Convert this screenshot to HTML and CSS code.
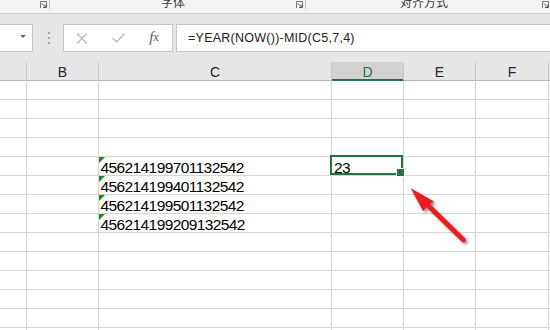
FILE: index.html
```html
<!DOCTYPE html>
<html lang="zh">
<head>
<meta charset="utf-8">
<link rel="stylesheet" href="styles.css">
</head>
<body>
<div class="app">
  <div class="ribbon">
    <div class="group g1">
      <svg class="launcher" width="7" height="8" viewBox="0 0 7 8"><path d="M0.5 7V0.5H6.5V7" fill="none" stroke="#777" stroke-width="1"/><path d="M2 2.5L5.5 6M3 6.5H6V3.5" fill="none" stroke="#555" stroke-width="1"/></svg>
    </div>
    <span class="sep"></span>
    <div class="group g2">
      <span class="glabel">字体</span>
      <svg class="launcher" width="7" height="8" viewBox="0 0 7 8"><path d="M0.5 7V0.5H6.5V7" fill="none" stroke="#777" stroke-width="1"/><path d="M2 2.5L5.5 6M3 6.5H6V3.5" fill="none" stroke="#555" stroke-width="1"/></svg>
    </div>
    <span class="sep"></span>
    <div class="group g3">
      <span class="glabel">对齐方式</span>
      <svg class="launcher" width="7" height="8" viewBox="0 0 7 8"><path d="M0.5 7V0.5H6.5V7" fill="none" stroke="#777" stroke-width="1"/><path d="M2 2.5L5.5 6M3 6.5H6V3.5" fill="none" stroke="#555" stroke-width="1"/></svg>
    </div>
  </div>

  <div class="fbar">
    <div class="namebox">
      <svg class="dd" width="6" height="3" viewBox="0 0 6 3"><path d="M0 0H6L3 3Z" fill="#6a6a6a"/></svg>
    </div>
    <div class="grip">
      <svg width="2" height="12" viewBox="0 0 2 12"><rect x="0" y="0" width="2" height="2" fill="#a6a6a6"/><rect x="0" y="5" width="2" height="2" fill="#a6a6a6"/><rect x="0" y="10" width="2" height="2" fill="#a6a6a6"/></svg>
    </div>
    <div class="fxbox">
      <span class="fxbtn">
        <svg width="12" height="11" viewBox="0 0 12 11"><path d="M1 0.5L11 10.5M11 0.5L1 10.5" stroke="#bdbdbd" stroke-width="1.3" fill="none"/></svg>
      </span>
      <span class="fxbtn">
        <svg width="13" height="10" viewBox="0 0 13 10"><path d="M0.5 5L4.5 9L12.5 0.8" stroke="#bdbdbd" stroke-width="1.4" fill="none"/></svg>
      </span>
      <span class="fxbtn fx"><i class="f">f</i><i class="x">x</i></span>
    </div>
    <div class="formula">=YEAR(NOW())-MID(C5,7,4)</div>
  </div>

  <div class="sheet">
    <div class="hd"></div><div class="hd">B</div><div class="hd">C</div><div class="hd hd-active">D</div><div class="hd">E</div><div class="hd">F</div><div class="hd"></div>

    <div class="c"></div><div class="c"></div><div class="c"></div><div class="c"></div><div class="c"></div><div class="c"></div><div class="c"></div>
    <div class="c"></div><div class="c"></div><div class="c"></div><div class="c"></div><div class="c"></div><div class="c"></div><div class="c"></div>
    <div class="c"></div><div class="c"></div><div class="c"></div><div class="c"></div><div class="c"></div><div class="c"></div><div class="c"></div>
    <div class="c"></div><div class="c"></div><div class="c"></div><div class="c"></div><div class="c"></div><div class="c"></div><div class="c"></div>

    <div class="c"></div><div class="c"></div><div class="c txt">456214199701132542</div><div class="c sel">23</div><div class="c"></div><div class="c"></div><div class="c"></div>
    <div class="c"></div><div class="c"></div><div class="c txt">456214199401132542</div><div class="c"></div><div class="c"></div><div class="c"></div><div class="c"></div>
    <div class="c"></div><div class="c"></div><div class="c txt">456214199501132542</div><div class="c"></div><div class="c"></div><div class="c"></div><div class="c"></div>
    <div class="c"></div><div class="c"></div><div class="c txt">456214199209132542</div><div class="c"></div><div class="c"></div><div class="c"></div><div class="c"></div>

    <div class="c"></div><div class="c"></div><div class="c"></div><div class="c"></div><div class="c"></div><div class="c"></div><div class="c"></div>
    <div class="c"></div><div class="c"></div><div class="c"></div><div class="c"></div><div class="c"></div><div class="c"></div><div class="c"></div>
    <div class="c"></div><div class="c"></div><div class="c"></div><div class="c"></div><div class="c"></div><div class="c"></div><div class="c"></div>
    <div class="c"></div><div class="c"></div><div class="c"></div><div class="c"></div><div class="c"></div><div class="c"></div><div class="c"></div>
    <div class="c"></div><div class="c"></div><div class="c"></div><div class="c"></div><div class="c"></div><div class="c"></div><div class="c"></div>
    <div class="c"></div><div class="c"></div><div class="c"></div><div class="c"></div><div class="c"></div><div class="c"></div><div class="c"></div>
  </div>

  <svg class="arrow" width="80" height="70" viewBox="0 0 80 70">
    <path d="M10.7 8.3L23 31L28 25.5L34 21.5Z" fill="#ee1a1f"/>
    <path d="M26 23.5L63.5 60" stroke="#ee1a1f" stroke-width="4.6" stroke-linecap="round" fill="none"/>
  </svg>
</div>
</body>
</html>
```

FILE: styles.css
```css
* { box-sizing: border-box; }
html, body { margin: 0; padding: 0; }
body {
  width: 550px;
  height: 330px;
  overflow: hidden;
  background: #ffffff;
  font-family: "Liberation Sans", Arial, "Noto Sans CJK SC", sans-serif;
}
.app {
  position: relative;
  width: 550px;
  height: 330px;
  overflow: hidden;
}

/* ribbon strip */
.ribbon {
  display: flex;
  height: 14px;
  background: #f3f3f3;
  border-bottom: 1px solid #d2d2d2;
  overflow: hidden;
}
.group {
  display: flex;
  align-items: flex-start;
  flex: none;
}
.g1 { width: 49px; justify-content: flex-end; }
.g2 { width: 255px; }
.g3 { width: 245px; }
.glabel {
  flex: 1;
  text-align: center;
  font-family: "Noto Sans CJK SC", sans-serif;
  font-size: 12px;
  line-height: 12px;
  color: #3c3c3c;
  margin-top: -4px;
}
.launcher {
  display: block;
  flex: none;
  margin-top: 1px;
  margin-right: 2px;
}
.sep {
  flex: none;
  width: 1px;
  height: 9px;
  background: #c4c4c4;
}

/* formula bar */
.fbar {
  display: flex;
  height: 48px;
  padding-top: 10px;
  background: #e6e6e6;
  align-items: flex-start;
}
.namebox {
  flex: none;
  width: 34px;
  height: 28px;
  margin-left: -1px;
  background: #fff;
  border: 1px solid #c6c6c6;
  display: flex;
  justify-content: flex-end;
  align-items: center;
  padding-right: 6px;
  padding-bottom: 3px;
}
.dd { display: block; }
.grip {
  flex: none;
  width: 30px;
  height: 28px;
  display: flex;
  justify-content: center;
  align-items: center;
  padding-left: 1px;
}
.grip svg { display: block; }
.fxbox {
  flex: none;
  width: 110px;
  height: 28px;
  background: #fff;
  border: 1px solid #c6c6c6;
  display: flex;
}
.fxbtn {
  width: 36px;
  display: flex;
  justify-content: center;
  align-items: center;
}
.fxbtn svg { display: block; }
.fx {
  font-family: "Liberation Serif", "DejaVu Serif", serif;
  color: #585858;
  padding-bottom: 1px;
}
.fx .f { font-size: 15px; }
.fx .x { font-size: 12px; margin-left: 0; }
.formula {
  flex: 1;
  height: 28px;
  margin-left: 3px;
  margin-right: -2px;
  background: #fff;
  border: 1px solid #c6c6c6;
  padding-left: 11px;
  font-size: 12.5px;
  letter-spacing: 0.25px;
  line-height: 26px;
  color: #222;
  white-space: nowrap;
}

/* sheet grid */
.sheet {
  display: grid;
  grid-template-columns: 27px 72px 233px 72px 72px 73px 1fr;
  grid-template-rows: 19px;
  grid-auto-rows: 19px;
}
.hd {
  background: #e6e6e6;
  border-right: 1px solid #c8c8c8;
  border-bottom: 1px solid #b5b5b5;
  text-align: center;
  font-size: 14px;
  line-height: 21px;
  height: 19px;
  color: #262626;
}
.hd-active {
  background: #d2d2d2;
  color: #217346;
  border-bottom-color: #217346;
  box-shadow: inset 0 -1px 0 #217346;
}
.c {
  position: relative;
  border-right: 1px solid #d4d4d4;
  border-bottom: 1px solid #d4d4d4;
  height: 19px;
  padding-left: 2px;
  font-size: 15.5px;
  letter-spacing: -0.6px;
  line-height: 22px;
  color: #000;
  white-space: nowrap;
}
.txt { padding-left: 1.5px; }
.txt::before {
  content: "";
  position: absolute;
  left: 0;
  top: 0;
  width: 6px;
  height: 6px;
  background: #1e8a1e;
  clip-path: polygon(0 0, 100% 0, 0 100%);
}
.sel::after {
  content: "";
  position: absolute;
  left: -2px;
  top: -2px;
  right: 0;
  bottom: 0;
  border: 2px solid #217346;
}
.sel::before {
  content: "";
  position: absolute;
  right: -2px;
  bottom: -2px;
  width: 7px;
  height: 7px;
  background: #217346;
  border: 1px solid #fff;
  z-index: 2;
}

/* annotation arrow */
.arrow {
  position: absolute;
  left: 400px;
  top: 180px;
  filter: drop-shadow(2px 2px 1.6px rgba(0, 0, 0, 0.45));
}
```
